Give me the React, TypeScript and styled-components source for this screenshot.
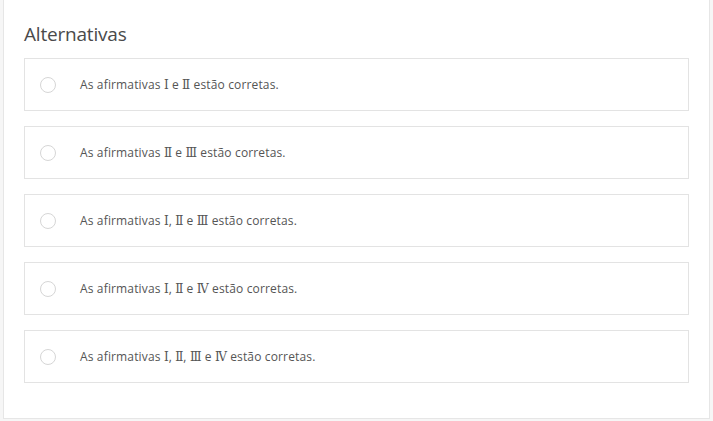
import React from "react";
import styled, { createGlobalStyle } from "styled-components";

const Global = createGlobalStyle`
  html, body { margin: 0; padding: 0; background: #f6f6f6; }
  body { font-family: "Open Sans", "Noto Sans", "Liberation Sans", sans-serif; }
`;

const Page = styled.div`
  padding: 0 3px 3px 3px;
`;

const Panel = styled.section`
  background: #ffffff;
  border: 1px solid #e6e6e6;
  border-top: none;
  padding: 20px 20px 35px 20px;
`;

const Title = styled.h2`
  margin: 0 0 10px 0;
  font-size: 19px;
  line-height: 28px;
  font-weight: 400;
  color: #4a4a4a;
  letter-spacing: -0.2px;
`;

const List = styled.div`
  display: flex;
  flex-direction: column;
  gap: 15px;
`;

const Option = styled.label`
  display: flex;
  align-items: center;
  height: 51px;
  border: 1px solid #e3e3e3;
  background: #fff;
  padding-left: 15px;
  cursor: pointer;
`;

const Radio = styled.span`
  width: 16px;
  height: 16px;
  border-radius: 50%;
  border: 1px solid #d6d6d6;
  box-sizing: border-box;
  flex: none;
  margin-top: 1px;
`;

const Text = styled.span`
  margin-left: 24px;
  font-size: 12px;
  letter-spacing: 0.15px;
  color: #555555;
`;

const Numeral = styled.span`
  font-family: "DejaVu Serif", serif;
  font-size: 12px;
  letter-spacing: 0;
`;

const options: string[][] = [
  ["Ⅰ", "Ⅱ"],
  ["Ⅱ", "Ⅲ"],
  ["Ⅰ", "Ⅱ", "Ⅲ"],
  ["Ⅰ", "Ⅱ", "Ⅳ"],
  ["Ⅰ", "Ⅱ", "Ⅲ", "Ⅳ"],
];

function renderNumerals(nums: string[]) {
  const out: React.ReactNode[] = [];
  nums.forEach((n, i) => {
    if (i > 0) {
      out.push(i === nums.length - 1 ? " e " : ", ");
    }
    out.push(<Numeral key={i}>{n}</Numeral>);
  });
  return out;
}

export default function App() {
  return (
    <>
      <Global />
      <Page>
        <Panel>
          <Title>Alternativas</Title>
          <List>
            {options.map((nums, idx) => (
              <Option key={idx}>
                <Radio />
                <Text>
                  As afirmativas {renderNumerals(nums)} estão corretas.
                </Text>
              </Option>
            ))}
          </List>
        </Panel>
      </Page>
    </>
  );
}
